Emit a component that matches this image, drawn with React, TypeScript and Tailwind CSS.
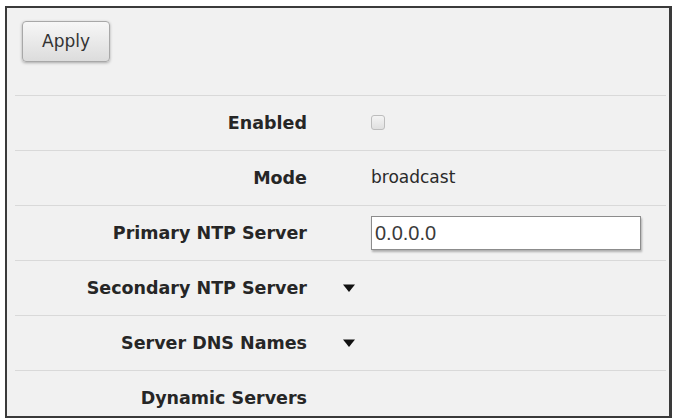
import React from "react";

type Row = {
  label: string;
  kind: "checkbox" | "text" | "input" | "toggle" | "none";
  value?: string;
};

const rows: Row[] = [
  { label: "Enabled", kind: "checkbox" },
  { label: "Mode", kind: "text", value: "broadcast" },
  { label: "Primary NTP Server", kind: "input", value: "0.0.0.0" },
  { label: "Secondary NTP Server", kind: "toggle" },
  { label: "Server DNS Names", kind: "toggle" },
  { label: "Dynamic Servers", kind: "none" },
];

const Arrow = () => (
  <svg width="12" height="8" viewBox="0 0 12 8" className="ml-[36px]">
    <path d="M0 0.5 H12 L6 8 Z" fill="#111" />
  </svg>
);

const Field = ({ row }: { row: Row }) => {
  switch (row.kind) {
    case "checkbox":
      return (
        <span className="ml-[64px] mt-[-2px] block w-[14px] h-[15px] rounded-[3px] border border-[#bdbdbd] bg-gradient-to-b from-[#f4f4f4] to-[#e0e0e0]" />
      );
    case "text":
      return <span className="ml-[64px] text-[17px] text-[#2a2a2a]">{row.value}</span>;
    case "input":
      return (
        <input
          readOnly
          value={row.value}
          className="ml-[64px] w-[270px] h-[34px] px-[3px] bg-white border border-[#8c8c8c] shadow-[1px_2px_2px_rgba(0,0,0,0.28)] text-[20px] text-[#3a3a3a] outline-none"
          style={{ fontFamily: '"Liberation Sans", Arial, sans-serif' }}
        />
      );
    case "toggle":
      return <Arrow />;
    default:
      return null;
  }
};

export default function App() {
  return (
    <div
      className="bg-white w-[673px] h-[420px] pt-[6px] pl-[5px]"
      style={{ fontFamily: '"DejaVu Sans", Verdana, sans-serif' }}
    >
      <div className="w-[667px] h-[412px] border-2 border-r-[3px] border-[#3a3a3a] bg-[#f1f1f1] overflow-hidden">
        <div className="h-[87px] pl-[15px] pt-[13px]">
          <button className="w-[88px] h-[41px] rounded-[4px] border border-[#a8a8a8] bg-gradient-to-b from-[#f7f7f7] to-[#dcdcdc] shadow-[0_1px_3px_rgba(0,0,0,0.3)] text-[17px] text-[#333]">
            Apply
          </button>
        </div>
        {rows.map((row) => (
          <div key={row.label} className="ml-[8px] mr-[3px] h-[55px] border-t border-[#d9d9d9] flex items-center">
            <div className="w-[292px] text-right font-bold text-[17.5px] text-[#262626]">{row.label}</div>
            <Field row={row} />
          </div>
        ))}
      </div>
    </div>
  );
}
